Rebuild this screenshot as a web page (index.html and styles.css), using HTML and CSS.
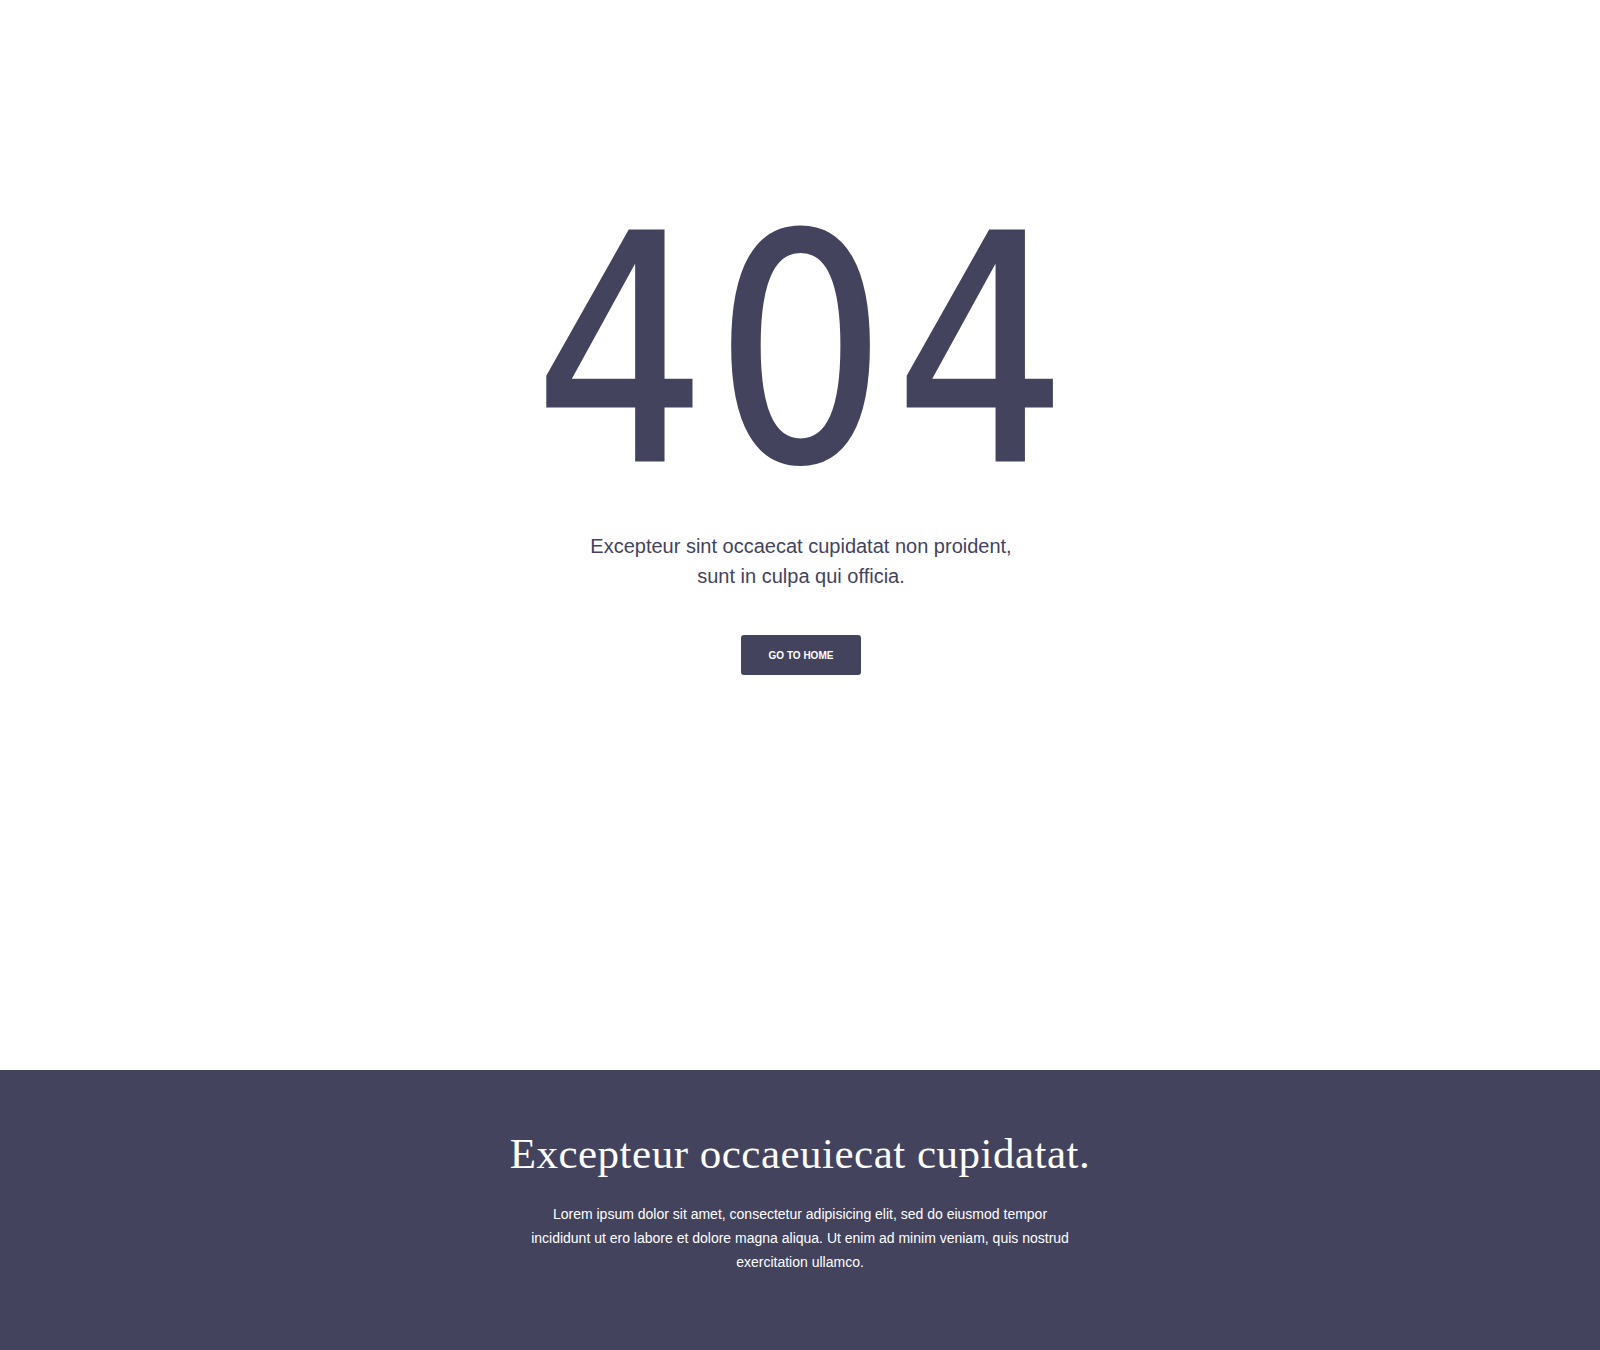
FILE: index.html
```html
<!DOCTYPE html>
<html lang="en">
<head>
<meta charset="utf-8">
<title>404</title>
<link rel="stylesheet" href="styles.css">
</head>
<body>
<main class="error">
  <h1 class="code">404</h1>
  <p class="lead">Excepteur sint occaecat cupidatat non proident,<br>sunt in culpa qui officia.</p>
  <a class="btn" href="#">GO TO HOME</a>
</main>
<footer class="footer">
  <h2 class="footer-title">Excepteur occaeuiecat cupidatat.</h2>
  <p class="footer-text">Lorem ipsum dolor sit amet, consectetur adipisicing elit, sed do eiusmod tempor incididunt ut ero labore et dolore magna aliqua. Ut enim ad minim veniam, quis nostrud exercitation ullamco.</p>
</footer>
</body>
</html>
```
FILE: styles.css
```css
html, body {
  margin: 0;
  padding: 0;
  background: #ffffff;
}
body {
  font-family: "Liberation Sans", Arial, sans-serif;
  color: #43435e;
}
.error {
  height: 1070px;
  box-sizing: border-box;
  padding-top: 195px;
  padding-left: 2px;
  display: flex;
  flex-direction: column;
  align-items: center;
}
.code {
  margin: 0;
  font-family: "DejaVu Sans Condensed", "DejaVu Sans", sans-serif;
  font-stretch: condensed;
  font-weight: normal;
  font-size: 314px;
  line-height: 1;
  letter-spacing: 9px;
  text-indent: 9px;
  transform: scaleX(0.955);
  color: #43435e;
  -webkit-text-stroke: 3px #43435e;
}
.lead {
  margin: 22px 0 0;
  font-size: 20px;
  line-height: 30px;
  text-align: center;
  color: #43435e;
}
.btn {
  margin-top: 44px;
  width: 120px;
  height: 40px;
  display: flex;
  align-items: center;
  justify-content: center;
  background: #43435e;
  color: #ffffff;
  border-radius: 3px;
  font-size: 10px;
  font-weight: bold;
  text-decoration: none;
}
.footer {
  height: 280px;
  box-sizing: border-box;
  background: #43435e;
  color: #ffffff;
  padding-top: 60px;
  display: flex;
  flex-direction: column;
  align-items: center;
  text-align: center;
}
.footer-title {
  margin: 0;
  font-family: "Liberation Serif", Georgia, serif;
  font-weight: normal;
  font-size: 43px;
  letter-spacing: 0.5px;
  line-height: 48px;
}
.footer-text {
  margin: 24px 0 0;
  width: 550px;
  font-size: 14px;
  line-height: 24px;
}
```
